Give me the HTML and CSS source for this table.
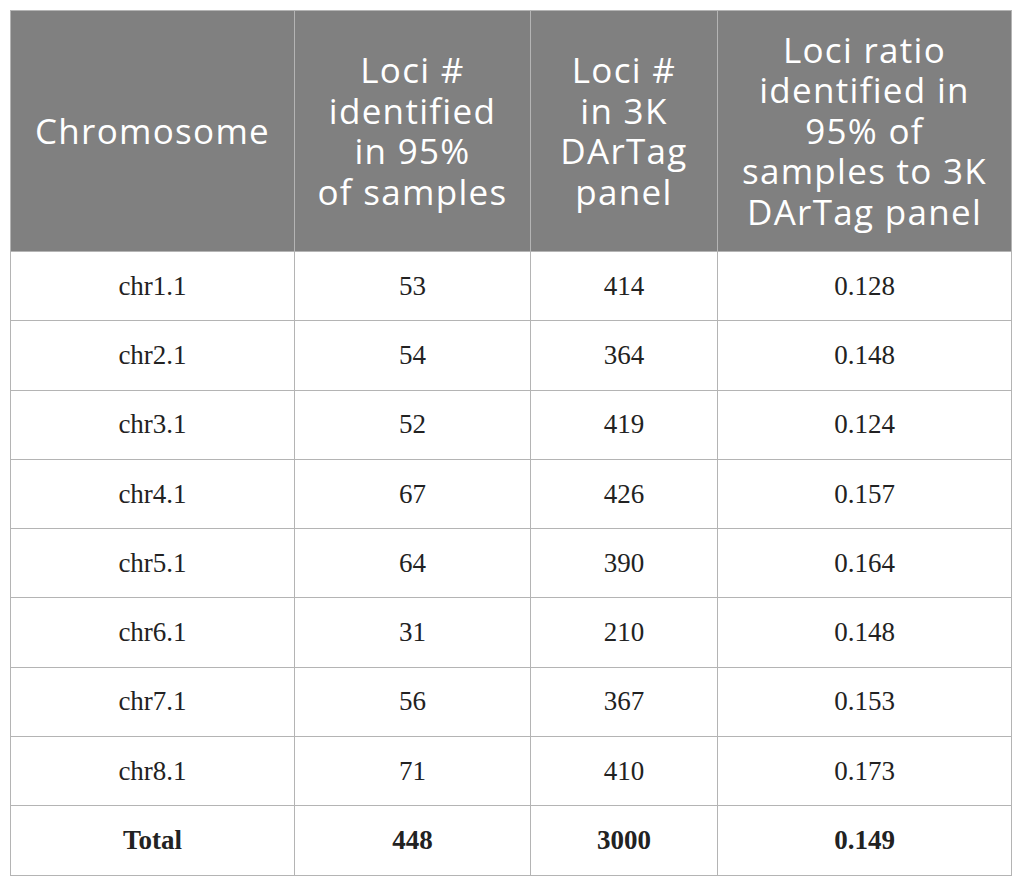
FILE: index.html
```html
<!DOCTYPE html>
<html lang="en">

<head>
    <meta charset="UTF-8">
    <title>Loci table</title>
    <link rel="stylesheet" href="styles.css">
</head>

<body>
    <table class="loci-table">
        <colgroup>
            <col class="c1">
            <col class="c2">
            <col class="c3">
            <col class="c4">
        </colgroup>
        <thead>
            <tr>
                <th>Chromosome</th>
                <th>Loci #<br>identified<br>in 95%<br>of samples</th>
                <th>Loci #<br>in 3K<br>DArTag<br>panel</th>
                <th>Loci ratio<br>identified in<br>95% of<br>samples to 3K<br>DArTag panel</th>
            </tr>
        </thead>
        <tbody>
            <tr><td>chr1.1</td><td>53</td><td>414</td><td>0.128</td></tr>
            <tr><td>chr2.1</td><td>54</td><td>364</td><td>0.148</td></tr>
            <tr><td>chr3.1</td><td>52</td><td>419</td><td>0.124</td></tr>
            <tr><td>chr4.1</td><td>67</td><td>426</td><td>0.157</td></tr>
            <tr><td>chr5.1</td><td>64</td><td>390</td><td>0.164</td></tr>
            <tr><td>chr6.1</td><td>31</td><td>210</td><td>0.148</td></tr>
            <tr><td>chr7.1</td><td>56</td><td>367</td><td>0.153</td></tr>
            <tr><td>chr8.1</td><td>71</td><td>410</td><td>0.173</td></tr>
            <tr class="total"><td>Total</td><td>448</td><td>3000</td><td>0.149</td></tr>
        </tbody>
    </table>
</body>

</html>
```

FILE: styles.css
```css
* {
    box-sizing: border-box;
}

body {
    margin: 10px;
    background-color: white;
}

.loci-table {
    width: 1001px;
    border-collapse: collapse;
    table-layout: fixed;
}

.c1 {
    width: 284px;
}

.c2 {
    width: 236px;
}

.c3 {
    width: 187px;
}

.c4 {
    width: 294px;
}

th,
td {
    border: 1px solid #b4b4b4;
    text-align: center;
    padding: 0;
}

th {
    height: 241px;
    background-color: #808080;
    color: white;
    font-family: "Open Sans", sans-serif;
    font-weight: 400;
    font-size: 35px;
    letter-spacing: 1.3px;
    line-height: 40.5px;
}

td {
    height: 69.3px;
    color: #222;
    font-family: "Liberation Serif", serif;
    font-size: 27px;
}

.total td {
    font-weight: bold;
}
```
